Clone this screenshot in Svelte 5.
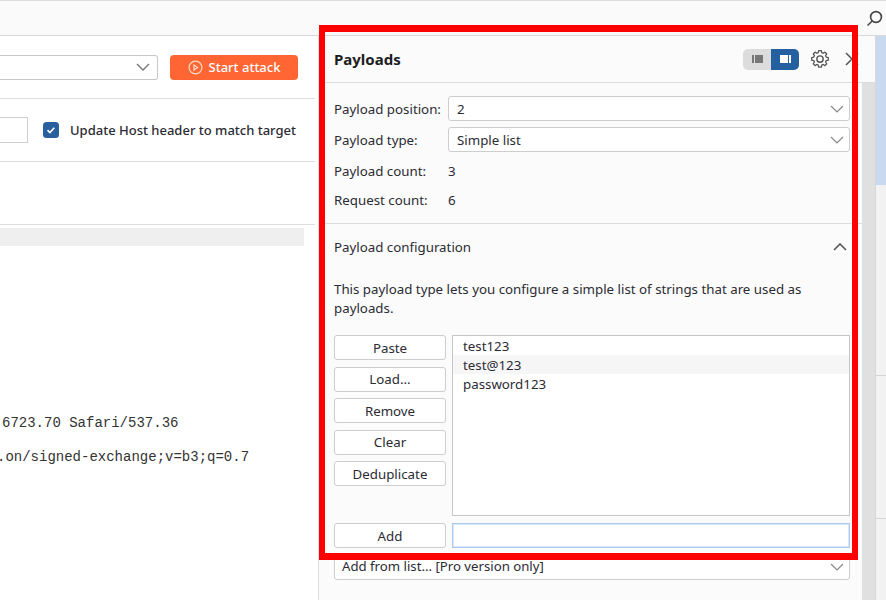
<script lang="ts">
	const buttons = ['Paste', 'Load...', 'Remove', 'Clear', 'Deduplicate'];
	const items = ['test123', 'test@123', 'password123'];
</script>

<div class="window">
	<div class="topbar">
		<svg class="search" width="18" height="18" viewBox="0 0 18 18" fill="none" stroke="#444" stroke-width="1.6">
			<circle cx="10" cy="8" r="5.4" />
			<path d="M6.2 12 1.5 16.5" />
		</svg>
	</div>
	<div class="body">
		<div class="left">
			<div class="row attack-row">
				<div class="target-select">
					<svg width="14" height="8" viewBox="0 0 14 8" fill="none" stroke="#777" stroke-width="1.4"><path d="M1 1l6 6 6-6" /></svg>
				</div>
				<button class="start">
					<svg width="15" height="15" viewBox="0 0 15 15" fill="none" stroke="#ffd9c7" stroke-width="1.2">
						<circle cx="7.5" cy="7.5" r="6.4" />
						<path d="M6 5l3.6 2.5L6 10z" />
					</svg>
					Start attack
				</button>
			</div>
			<div class="row host-row">
				<div class="port"></div>
				<span class="check">
					<svg width="16" height="16" viewBox="0 0 16 16"><rect width="16" height="16" rx="3.5" fill="#2a5f9e" /><path d="M4.5 8.2l2.4 2.3 4.4-4.7" fill="none" stroke="#fff" stroke-width="1.6" /></svg>
				</span>
				<span class="host-label">Update Host header to match target</span>
			</div>
			<div class="row blank-row"></div>
			<div class="request">
				<div class="grey-line"></div>
				<pre class="req-1">6723.70 Safari/537.36</pre>
				<pre class="req-2">.on/signed-exchange;v=b3;q=0.7</pre>
			</div>
		</div>

		<div class="panel">
			<header class="head">
				<h2>Payloads</h2>
				<div class="toggle">
					<span class="tog off">
						<svg width="11" height="8" viewBox="0 0 11 8" fill="#777"><rect width="2" height="8" /><rect x="3" width="8" height="8" /></svg>
					</span>
					<span class="tog on">
						<svg width="11" height="8" viewBox="0 0 11 8" fill="#fff"><rect width="8" height="8" /><rect x="9" width="2" height="8" /></svg>
					</span>
				</div>
				<svg class="gear" width="20" height="20" viewBox="0 0 24 24" fill="none" stroke="#555" stroke-width="1.7" stroke-linejoin="round">
					<path d="M10.3 2.2h3.4l.6 2.7 1.8.8 2.4-1.5 2.3 2.4-1.5 2.3.8 1.8 2.7.6v3.4l-2.7.6-.8 1.8 1.5 2.3-2.3 2.4-2.4-1.5-1.8.8-.6 2.7h-3.4l-.6-2.7-1.8-.8-2.4 1.5-2.3-2.4 1.5-2.3-.8-1.8-2.7-.6v-3.4l2.7-.6.8-1.8-1.5-2.3 2.3-2.4 2.4 1.5 1.8-.8z" transform="translate(12 12) scale(.92) translate(-12 -13.2)" />
					<circle cx="12" cy="12" r="3.8" />
				</svg>
				<svg class="close" width="14" height="14" viewBox="0 0 14 14" fill="none" stroke="#555" stroke-width="1.5"><path d="M1 1l12 12M13 1L1 13" /></svg>
			</header>

			<div class="panel-body">
				<div class="panel-main">
					<section class="settings">
						<div class="field">
							<label for="pos">Payload position:</label>
							<div class="select" id="pos">2<svg width="14" height="8" viewBox="0 0 14 8" fill="none" stroke="#888" stroke-width="1.2"><path d="M1 1l6 6 6-6" /></svg></div>
						</div>
						<div class="field">
							<label for="type">Payload type:</label>
							<div class="select" id="type">Simple list<svg width="14" height="8" viewBox="0 0 14 8" fill="none" stroke="#888" stroke-width="1.2"><path d="M1 1l6 6 6-6" /></svg></div>
						</div>
						<div class="counts">
							<div class="field count"><span>Payload count:</span><span>3</span></div>
							<div class="field count"><span>Request count:</span><span>6</span></div>
						</div>
					</section>

					<section class="config">
						<div class="config-head">
							<h3>Payload configuration</h3>
							<svg width="14" height="8" viewBox="0 0 14 8" fill="none" stroke="#555" stroke-width="1.6"><path d="M1 7l6-6 6 6" /></svg>
						</div>
						<p>This payload type lets you configure a simple list of strings that are used as payloads.</p>
						<div class="list-wrap">
							<div class="btns">
								{#each buttons as b}
									<button>{b}</button>
								{/each}
							</div>
							<ul>
								{#each items as item, i}
									<li class:hl={i === 1}>{item}</li>
								{/each}
							</ul>
						</div>
						<div class="add-row">
							<button>Add</button>
							<input type="text" />
						</div>
						<div class="select from-list">Add from list... [Pro version only]<svg width="14" height="8" viewBox="0 0 14 8" fill="none" stroke="#888" stroke-width="1.2"><path d="M1 1l6 6 6-6" /></svg></div>
					</section>
				</div>
				<div class="scrollbar"></div>
			</div>
		</div>

		<div class="side">
			<div class="side-blue"></div>
			<div class="side-block first"></div>
			<div class="side-block"></div>
			<div class="side-block"></div>
		</div>
	</div>
	<div class="redbox"></div>
</div>

<style>
	:global(body) {
		margin: 0;
	}

	.window {
		position: relative;
		width: 886px;
		height: 600px;
		overflow: hidden;
		background: #fff;
		font-family: 'Noto Sans', 'Open Sans', sans-serif;
		font-size: 13.3px;
		color: #2b2b33;
	}

	.topbar {
		height: 34px;
		background: #fafafa;
		border-top: 1px solid #dcdcdc;
		border-bottom: 1px solid #d8d8d8;
		display: flex;
		justify-content: flex-end;
		align-items: center;
	}

	.search {
		margin-right: 2px;
	}

	.body {
		display: flex;
		height: 564px;
	}

	.left {
		width: 318px;
		flex: none;
		background: #fff;
	}

	.row {
		display: flex;
		align-items: center;
		margin-right: 3px;
		border-bottom: 1px solid #dedede;
	}

	.attack-row {
		height: 62px;
	}

	.target-select {
		width: 158px;
		height: 25px;
		box-sizing: border-box;
		border: 1px solid #c8c8c8;
		border-left: none;
		border-radius: 0 3px 3px 0;
		display: flex;
		align-items: center;
		justify-content: flex-end;
		padding-right: 7px;
	}

	.start {
		margin-left: 12px;
		width: 128px;
		height: 25px;
		border: none;
		border-radius: 4px;
		background: #ff6633;
		color: #fff;
		font: 500 13px 'Noto Sans', sans-serif;
		display: flex;
		align-items: center;
		justify-content: center;
		gap: 6px;
		padding: 0;
	}

	.host-row {
		height: 62px;
	}

	.port {
		width: 28px;
		height: 26px;
		box-sizing: border-box;
		border: 1px solid #cfcfcf;
		border-left: none;
	}

	.check {
		margin-left: 15px;
		height: 16px;
	}

	.host-label {
		margin-left: 11px;
		font-size: 13px;
		font-weight: 500;
		white-space: nowrap;
	}

	.blank-row {
		height: 62px;
	}

	.request {
		height: 370px;
		padding-top: 3px;
		overflow: hidden;
	}

	.grey-line {
		width: 304px;
		height: 18px;
		background: #efefef;
	}

	pre {
		margin: 0;
		font: 14px 'Liberation Mono', monospace;
		color: #333;
		white-space: pre;
	}

	.req-1 {
		margin: 160px 0 0 2px;
		line-height: 34px;
	}

	.req-2 {
		margin-left: -3px;
		line-height: 34px;
	}

	.panel {
		width: 557px;
		flex: none;
		display: flex;
		flex-direction: column;
		background: #fbfbfb;
		border-left: 1px solid #dedede;
		box-sizing: border-box;
	}

	.head {
		height: 47px;
		flex: none;
		box-sizing: border-box;
		border-bottom: 1px solid #dcdcdc;
		display: flex;
		align-items: center;
		padding-left: 15px;
	}

	h2 {
		margin: 0;
		font-size: 15px;
		font-weight: 700;
		color: #1c1c22;
		flex: 1;
	}

	.toggle {
		display: flex;
		height: 21px;
		border-radius: 5px;
		overflow: hidden;
	}

	.tog {
		width: 28px;
		display: flex;
		align-items: center;
		justify-content: center;
	}

	.tog.off {
		background: #dcdcdc;
	}

	.tog.on {
		background: #24609f;
	}

	.gear {
		margin-left: 11px;
	}

	.close {
		margin-left: 15px;
		margin-right: 16px;
	}

	.panel-body {
		flex: 1;
		display: flex;
		min-height: 0;
	}

	.panel-main {
		width: 543px;
		flex: none;
	}

	.scrollbar {
		flex: 1;
		background: #e0e0e0;
	}

	.settings {
		padding: 13px 12px 0 15px;
		height: 141px;
		box-sizing: border-box;
		border-bottom: 1px solid #dcdcdc;
	}

	.field {
		display: flex;
		align-items: center;
		height: 25px;
		margin-bottom: 6px;
	}

	.field label,
	.field.count span:first-child {
		width: 114px;
		flex: none;
		white-space: nowrap;
	}

	.counts {
		padding-top: 1px;
	}

	.field.count {
		height: 23px;
		margin-bottom: 6px;
	}

	.select {
		flex: 1;
		height: 25px;
		box-sizing: border-box;
		border: 1px solid #cdcdcd;
		border-radius: 3px;
		background: #fff;
		display: flex;
		align-items: center;
		justify-content: space-between;
		padding: 0 5px 0 8px;
	}

	.config {
		padding: 0 12px 0 15px;
	}

	.config-head {
		height: 45px;
		display: flex;
		align-items: center;
		justify-content: space-between;
		padding-right: 3px;
	}

	h3 {
		margin: 0;
		font-size: 13.3px;
		font-weight: 400;
	}

	.config p {
		margin: 11px 0 17px;
		line-height: 19px;
	}

	.list-wrap {
		display: flex;
		gap: 6px;
	}

	.btns {
		display: flex;
		flex-direction: column;
		gap: 6.5px;
		width: 112px;
		flex: none;
	}

	button {
		font: 400 13.3px 'Noto Sans', sans-serif;
		color: #2b2b33;
	}

	.btns button,
	.add-row button {
		width: 112px;
		height: 25px;
		box-sizing: border-box;
		background: #fff;
		border: 1px solid #cdcdcd;
		border-radius: 3px;
		padding: 0;
	}

	ul {
		flex: 1;
		height: 181px;
		box-sizing: border-box;
		margin: 0;
		padding: 0;
		list-style: none;
		background: #fff;
		border: 1px solid #c6c6c6;
	}

	li {
		height: 19px;
		box-sizing: border-box;
		padding: 1px 0 0 10px;
		line-height: 19px;
	}

	li.hl {
		background: #f6f6f6;
	}

	.add-row {
		display: flex;
		gap: 6px;
		margin-top: 7px;
	}

	.add-row input {
		flex: 1;
		min-width: 0;
		height: 25px;
		box-sizing: border-box;
		border: 1px solid #a9c9ef;
		box-shadow: inset 0 0 0 1px #dbe8f8;
		outline: none;
		background: #fff;
		padding: 0;
	}

	.from-list {
		margin-top: 7px;
		flex: none;
		padding-left: 7px;
		font-size: 13.2px;
		line-height: 21px;
		align-items: flex-start;
	}

	.from-list svg {
		margin-top: 7px;
	}

	.side {
		flex: 1;
		background: #f3f2f2;
		border-left: 1px solid #d8d8d8;
		box-sizing: border-box;
	}

	.side-blue {
		height: 149px;
		background: #c9d9f0;
	}

	.side-block {
		height: 143px;
		box-sizing: border-box;
		border-bottom: 1px solid #d4d4d4;
	}

	.side-block.first {
		height: 191px;
	}

	.redbox {
		position: absolute;
		left: 319px;
		top: 25px;
		width: 539px;
		height: 535px;
		box-sizing: border-box;
		border-style: solid;
		border-color: #ff0000;
		border-width: 7px 6px;
		pointer-events: none;
	}
</style>
